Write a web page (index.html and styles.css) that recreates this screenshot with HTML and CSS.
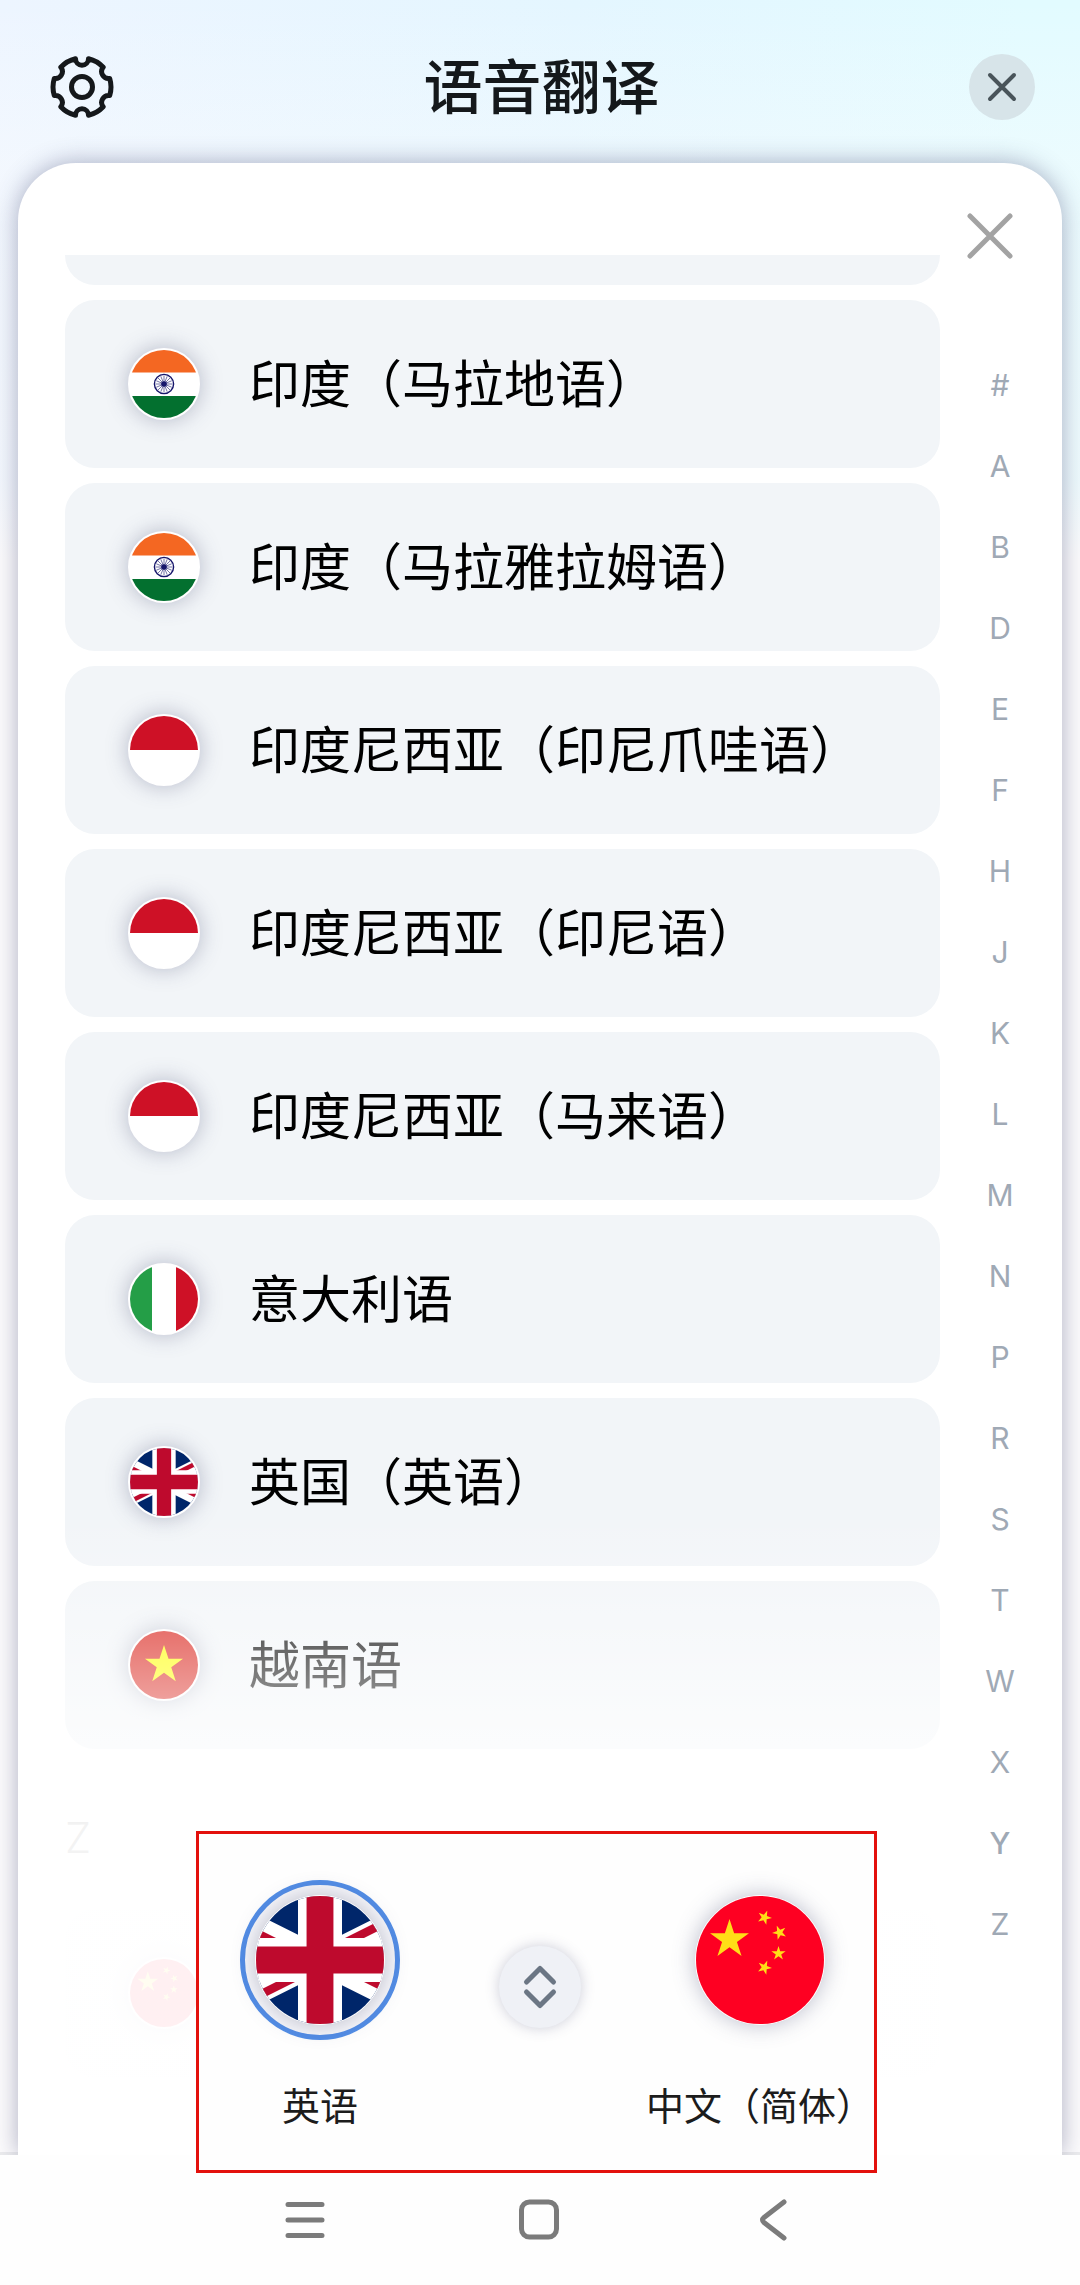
FILE: index.html
```html
<!DOCTYPE html>
<html lang="zh-CN">
<head>
<meta charset="utf-8">
<meta name="viewport" content="width=device-width, initial-scale=1">
<title>语音翻译</title>
<link rel="stylesheet" href="styles.css">
</head>
<body>
<svg class="sprite" aria-hidden="true">
  <symbol id="flag-in" viewBox="0 0 68 68">
    <path fill="#fff" d="M0 0h68v68H0z"/>
    <path fill="#f46722" d="M0 0h68v22.500H0z"/>
    <path fill="#03702f" d="M0 46h68v22H0z"/>
    <g fill="none" stroke="#16166b">
      <circle cx="34" cy="34" r="9.600" stroke-width="1.400"/>
      <path stroke-width="0.600" d="M34 26v16M26 34h16M28.300 28.300l11.400 11.400M39.700 28.300L28.300 39.700M30.900 26.600l6.200 14.800M37.100 26.600l-6.200 14.800M26.600 30.900l14.800 6.200M26.600 37.100l14.800-6.200"/>
    </g>
    <circle cx="34" cy="34" r="2.800" fill="#16166b"/>
  </symbol>
  <symbol id="flag-id" viewBox="0 0 68 68">
    <path fill="#fff" d="M0 0h68v68H0z"/>
    <path fill="#ce1126" d="M0 0h68v34H0z"/>
  </symbol>
  <symbol id="flag-it" viewBox="0 0 68 68">
    <path fill="#fff" d="M0 0h68v68H0z"/>
    <path fill="#249e47" d="M0 0h22v68H0z"/>
    <path fill="#ce1126" d="M46 0h22v68H46z"/>
  </symbol>
  <symbol id="flag-gb" viewBox="15 0 30 30">
    <clipPath id="gb-quarters"><path d="M30 15h30v15zM30 15v15H0zM30 15H0V0zM30 15V0h30z"/></clipPath>
    <path fill="#00266a" d="M0 0h60v30H0z"/>
    <path stroke="#fff" stroke-width="6" d="M0 0l60 30M60 0L0 30"/>
    <path stroke="#be0a2d" stroke-width="4" clip-path="url(#gb-quarters)" d="M0 0l60 30M60 0L0 30"/>
    <path stroke="#fff" stroke-width="10.300" d="M30 0v30M0 15h60"/>
    <path stroke="#be0a2d" stroke-width="6.300" d="M30 0v30M0 15h60"/>
  </symbol>
  <symbol id="star" viewBox="-10 -10 20 20">
    <path d="M0-10L2.250-3.090 9.510-3.090 3.630 1.180 5.880 8.090 0 3.820-5.880 8.090-3.630 1.180-9.510-3.090-2.250-3.090z"/>
  </symbol>
  <symbol id="flag-vn" viewBox="0 0 68 68">
    <path fill="#da251d" d="M0 0h68v68H0z"/>
    <use href="#star" x="14" y="14" width="40" height="40" fill="#ff0"/>
  </symbol>
  <symbol id="flag-cn" viewBox="0 0 128 128">
    <path fill="#fe0022" d="M0 0h128v128H0z"/>
    <g fill="#ffde17">
      <use href="#star" x="13" y="23" width="41" height="41"/>
      <use href="#star" x="61" y="14" width="15" height="15" transform="rotate(22 68.500 21.500)"/>
      <use href="#star" x="76" y="29" width="15" height="15" transform="rotate(-22 83.500 36.500)"/>
      <use href="#star" x="75" y="50" width="15" height="15"/>
      <use href="#star" x="61" y="64" width="15" height="15" transform="rotate(22 68.500 71.500)"/>
    </g>
  </symbol>
</svg>

<div class="app">
  <header class="topbar">
    <button class="icon-button" type="button" aria-label="设置">
      <svg class="gear" viewBox="-32 -32 64 64">
        <path d="M6.500-28.300A29 29 0 0 1 21.200-19.800 7 7 0 0 0 27.700-8.500 29 29 0 0 1 27.700 8.500 7 7 0 0 0 21.200 19.800 29 29 0 0 1 6.500 28.300 6.500 6.500 0 0 0-6.500 28.300 29 29 0 0 1-21.200 19.800 7 7 0 0 0-27.700 8.500 29 29 0 0 1-27.700-8.500 7 7 0 0 0-21.200-19.800 29 29 0 0 1-6.500-28.300 6.500 6.500 0 0 0 6.500-28.300z"/>
        <circle r="10.500"/>
      </svg>
    </button>
    <h1 class="title">语音翻译</h1>
    <button class="icon-button round-close" type="button" aria-label="关闭">
      <svg viewBox="0 0 66 66"><path d="M21 21l24 24M45 21L21 45"/></svg>
    </button>
  </header>

  <main class="stage">
    <section class="panel">
      <div class="panel-head">
        <button class="icon-button panel-close" type="button" aria-label="关闭列表">
          <svg viewBox="0 0 50 50"><path d="M5 5l40 40M45 5L5 45"/></svg>
        </button>
      </div>
      <div class="panel-body">
        <div class="list">
          <div class="card-tail"></div>
          <button class="card" type="button"><svg class="flag"><use href="#flag-in"/></svg><span class="name">印度（马拉地语）</span></button>
          <button class="card" type="button"><svg class="flag"><use href="#flag-in"/></svg><span class="name">印度（马拉雅拉姆语）</span></button>
          <button class="card" type="button"><svg class="flag"><use href="#flag-id"/></svg><span class="name">印度尼西亚（印尼爪哇语）</span></button>
          <button class="card" type="button"><svg class="flag"><use href="#flag-id"/></svg><span class="name">印度尼西亚（印尼语）</span></button>
          <button class="card" type="button"><svg class="flag"><use href="#flag-id"/></svg><span class="name">印度尼西亚（马来语）</span></button>
          <button class="card" type="button"><svg class="flag"><use href="#flag-it"/></svg><span class="name">意大利语</span></button>
          <button class="card" type="button"><svg class="flag"><use href="#flag-gb"/></svg><span class="name">英国（英语）</span></button>
          <button class="card" type="button"><svg class="flag"><use href="#flag-vn"/></svg><span class="name">越南语</span></button>
          <h2 class="letter">Z</h2>
          <div class="card"><svg class="flag"><use href="#flag-cn"/></svg></div>
        </div>
        <nav class="index">
          <a href="#">#</a><a href="#">A</a><a href="#">B</a><a href="#">D</a><a href="#">E</a><a href="#">F</a><a href="#">H</a><a href="#">J</a><a href="#">K</a><a href="#">L</a><a href="#">M</a><a href="#">N</a><a href="#">P</a><a href="#">R</a><a href="#">S</a><a href="#">T</a><a href="#">W</a><a href="#">X</a><a class="current" href="#">Y</a><a href="#">Z</a>
        </nav>
      </div>
    </section>
  </main>

  <nav class="navbar">
    <button class="icon-button" type="button" aria-label="菜单"><svg viewBox="0 0 60 60"><path d="M13 14.500h34M13 30h34M13 45.500h34"/></svg></button>
    <button class="icon-button" type="button" aria-label="主页"><svg viewBox="0 0 60 60"><rect x="11.500" y="12" width="35" height="35" rx="8"/></svg></button>
    <button class="icon-button" type="button" aria-label="返回"><svg viewBox="0 0 60 60"><path d="M39 12L19 27.500Q16 30 19 32.500L39 48"/></svg></button>
  </nav>

  <div class="picker">
    <button class="choice" type="button"><span class="ring selected"><svg class="flag flag-large"><use href="#flag-gb"/></svg></span><span>英语</span></button>
    <button class="icon-button swap" type="button" aria-label="互换语言"><svg viewBox="0 0 82 82"><path d="M27.500 36L41 22.500 54.500 36M27.500 46L41 59.500 54.500 46"/></svg></button>
    <button class="choice" type="button"><span class="ring"><svg class="flag flag-large"><use href="#flag-cn"/></svg></span><span>中文（简体）</span></button>
  </div>
</div>
</body>
</html>
```

FILE: styles.css
```css
* {
  box-sizing: border-box;
}

body {
  margin: 0;
  font-family: "Noto Sans CJK SC", sans-serif;
  color: #000;
}

button {
  margin: 0;
  padding: 0;
  border: 0;
  background: none;
  color: inherit;
  font: inherit;
}

svg {
  display: block;
  fill: none;
  stroke-linecap: round;
  stroke-linejoin: round;
}

.sprite {
  position: absolute;
  width: 0;
  height: 0;
}

.app {
  position: relative;
  display: flex;
  flex-direction: column;
  height: 100vh;
  background:
    linear-gradient(to bottom, rgba(253, 252, 253, 0) 0, rgba(253, 252, 253, 0.35) 160px, rgba(253, 252, 253, 0.5) 480px, #fdfcfd 560px),
    linear-gradient(95deg, #edf5ff 0, #e4f6ff 45%, #e2fbff 80%);
}

/* Top bar */
.topbar {
  display: flex;
  flex: none;
  align-items: center;
  justify-content: space-between;
  padding: 54px 45px 43px 50px;
}

.title {
  margin: 0;
  padding-bottom: 6px;
  font-size: 59px;
  font-weight: 500;
  line-height: 60px;
  color: #14181b;
}

.gear {
  width: 64px;
  height: 64px;
  stroke: #15181b;
  stroke-width: 5;
}

.round-close {
  width: 66px;
  height: 66px;
  border-radius: 50%;
  background: #d7e4e9;
}

.round-close svg {
  stroke: #49545a;
  stroke-width: 4;
}

/* Language panel */
.stage {
  display: flex;
  flex: 1;
  min-height: 0;
  padding: 0 18px;
  box-shadow: inset 0 -3px #ececee;
}

.panel {
  display: flex;
  flex: 1;
  flex-direction: column;
  border-radius: 58px 58px 0 0;
  background: #fff;
  box-shadow: 0 0 24px rgba(60, 65, 110, 0.42);
}

.panel-head {
  display: flex;
  flex: none;
  justify-content: flex-end;
  height: 92px;
  padding: 48px 47px 0 0;
}

.panel-close {
  width: 50px;
  height: 50px;
}

.panel-close svg {
  stroke: #a3a3a3;
  stroke-width: 5;
}

.panel-body {
  display: grid;
  flex: 1;
  grid-template-columns: minmax(0, 1fr) 122px;
  min-height: 0;
  padding-left: 47px;
}

.list {
  position: relative;
  display: flex;
  flex-direction: column;
  gap: 15px;
  overflow: hidden;
}

/* Fades the rows out towards the language picker */
.list::after {
  content: "";
  position: absolute;
  right: 0;
  bottom: 0;
  left: 0;
  height: 640px;
  background: linear-gradient(to bottom, rgba(255, 255, 255, 0) 0, rgba(255, 255, 255, 0.94) 310px);
}

.card-tail {
  flex: none;
  height: 30px;
  border-radius: 0 0 30px 30px;
  background: #f2f5f8;
}

.card {
  display: flex;
  flex: none;
  gap: 49px;
  align-items: center;
  height: 168px;
  padding: 0 63px;
  border-radius: 30px;
  background: #f2f5f8;
  font-size: 51px;
  line-height: 72px;
  text-align: left;
  white-space: nowrap;
}

.name {
  padding-bottom: 6px;
}

.flag {
  flex: none;
  width: 72px;
  height: 72px;
  border: 2px solid #fff;
  border-radius: 50%;
  background: #fff;
  box-shadow: 0 0 22px rgba(70, 75, 115, 0.36);
}

.letter {
  flex: none;
  height: 130px;
  margin: 0;
  padding-top: 44px;
  font-family: Inter, sans-serif;
  font-size: 42px;
  font-weight: 300;
  line-height: 60px;
  color: #333;
}

.letter + .card {
  background: #fafbfc;
}

.index {
  display: flex;
  flex-direction: column;
  align-items: center;
  padding: 90px 2px 0 0;
  font-family: Inter, sans-serif;
  font-size: 30px;
  line-height: 81px;
}

.index a {
  color: #9fa9b5;
  text-decoration: none;
}

.index .current {
  font-weight: 500;
}

/* System navigation */
.navbar {
  position: relative;
  display: flex;
  flex: none;
  gap: 175px;
  align-items: center;
  justify-content: center;
  height: 130px;
  background: #fefefe;
}

.navbar svg {
  width: 60px;
  height: 60px;
  stroke: #7b7b7b;
  stroke-width: 5;
}

/* Source and target picker, floating over the list */
.picker {
  position: absolute;
  right: 203px;
  bottom: 112px;
  left: 196px;
  display: flex;
  align-items: flex-start;
  justify-content: space-between;
  height: 342px;
  padding: 46px 0 0 7px;
  border: 3px solid #e3100c;
  background: #fefefe;
}

.choice {
  display: flex;
  flex-direction: column;
  gap: 36px;
  align-items: center;
  width: 228px;
  font-size: 38px;
  line-height: 56px;
  color: #1c1c1c;
  white-space: nowrap;
}

.ring {
  padding: 10px;
  border: 5px solid transparent;
  border-radius: 50%;
}

.ring.selected {
  border-color: #528de6;
  background: #f8f8fb;
}

.flag-large {
  width: 130px;
  height: 130px;
  border-width: 1px;
}

.swap {
  width: 82px;
  height: 82px;
  margin-top: 66px;
  border-radius: 50%;
  background: #eff1f6;
  box-shadow: 0 0 14px rgba(60, 65, 110, 0.26);
}

.swap svg {
  stroke: #6b7684;
  stroke-width: 5;
}
```
